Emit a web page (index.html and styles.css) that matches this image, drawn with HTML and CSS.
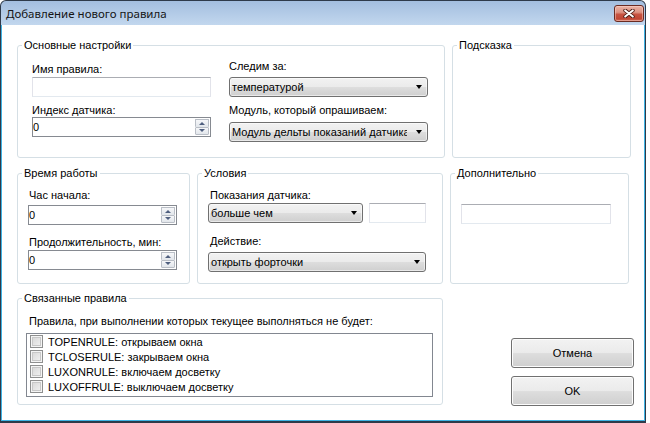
FILE: index.html
```html
<!DOCTYPE html>
<html lang="ru">
<head>
<meta charset="utf-8">
<title>Добавление нового правила</title>
<link rel="stylesheet" href="styles.css">
</head>
<body>
<div class="window">
  <div class="titlebar">
    <span class="title">Добавление нового правила</span>
    <button class="close" aria-label="Закрыть">
      <svg width="12" height="9" viewBox="0 0 12 9">
        <path d="M2.2 1.4 L9.8 7.6 M9.8 1.4 L2.2 7.6" stroke="#4a1a12" stroke-width="3.8" stroke-linecap="round"/>
        <path d="M2.2 1.4 L9.8 7.6 M9.8 1.4 L2.2 7.6" stroke="#ffffff" stroke-width="2" stroke-linecap="round"/>
      </svg>
    </button>
  </div>
  <div class="client">
    <div class="row row1">
      <section class="group g-main">
        <div class="gtitle">Основные настройки</div>
        <div class="cols">
          <div class="col c1">
            <div class="lbl m1-l1">Имя правила:</div>
            <div class="tb m1-tb"></div>
            <div class="lbl m1-l2">Индекс датчика:</div>
            <div class="num w-179"><span class="val">0</span><span class="spin"><span class="up"></span><span class="down"></span></span></div>
          </div>
          <div class="col c2">
            <div class="lbl m2-l1">Следим за:</div>
            <div class="combo w-199 m2-c1"><span class="ctext">температурой</span><span class="arrow"></span></div>
            <div class="lbl m2-l2">Модуль, который опрашиваем:</div>
            <div class="combo w-199 m2-c2"><span class="ctext clip">Модуль дельты показаний датчика</span><span class="arrow"></span></div>
          </div>
        </div>
      </section>
      <section class="group g-hint">
        <div class="gtitle">Подсказка</div>
      </section>
    </div>

    <div class="row row2">
      <section class="group g-time">
        <div class="gtitle">Время работы</div>
        <div class="inner">
          <div class="lbl t-l1">Час начала:</div>
          <div class="num w-149 t-n1"><span class="val">0</span><span class="spin"><span class="up"></span><span class="down"></span></span></div>
          <div class="lbl t-l2">Продолжительность, мин:</div>
          <div class="num w-149 t-n2"><span class="val">0</span><span class="spin"><span class="up"></span><span class="down"></span></span></div>
        </div>
      </section>
      <section class="group g-cond">
        <div class="gtitle">Условия</div>
        <div class="inner">
          <div class="lbl c-l1">Показания датчика:</div>
          <div class="pair">
            <div class="combo w-155"><span class="ctext">больше чем</span><span class="arrow"></span></div>
            <div class="tb w-57"></div>
          </div>
          <div class="lbl c-l2">Действие:</div>
          <div class="combo w-218 c-c2"><span class="ctext">открыть форточки</span><span class="arrow"></span></div>
        </div>
      </section>
      <section class="group g-extra">
        <div class="gtitle">Дополнительно</div>
        <div class="inner">
          <div class="tb w-150 x-tb"></div>
        </div>
      </section>
    </div>

    <div class="row row3">
      <section class="group g-linked">
        <div class="gtitle">Связанные правила</div>
        <div class="inner">
          <div class="lbl r-l1">Правила, при выполнении которых текущее выполняться не будет:</div>
          <div class="checklist">
            <div class="item"><span class="cb"></span><span>TOPENRULE: открываем окна</span></div>
            <div class="item"><span class="cb"></span><span>TCLOSERULE: закрываем окна</span></div>
            <div class="item"><span class="cb"></span><span>LUXONRULE: включаем досветку</span></div>
            <div class="item"><span class="cb"></span><span>LUXOFFRULE: выключаем досветку</span></div>
          </div>
        </div>
      </section>
      <div class="buttons">
        <button class="btn">Отмена</button>
        <button class="btn">OK</button>
      </div>
    </div>
  </div>
</div>
</body>
</html>
```
FILE: styles.css
```css
* { box-sizing: border-box; }
html, body { margin: 0; padding: 0; background: #fff; }
body {
  width: 650px; height: 423px; overflow: hidden;
  font-family: "Liberation Sans", Arial, sans-serif;
  font-size: 11px; color: #000;
}

.window {
  width: 646px; height: 423px;
  border: 1px solid #2e3a4a; border-bottom-width: 2px;
  border-radius: 6px 6px 0 0;
  background: linear-gradient(#a3bedf, #c2d7ee 24px, #c2d7ee);
  display: flex; flex-direction: column;
}

.titlebar {
  height: 24px; flex: none;
  display: flex; align-items: flex-start; justify-content: space-between;
}
.title {
  font-family: "Noto Sans", "Open Sans", sans-serif;
  font-size: 11.5px; line-height: 16px;
  margin: 5px 0 0 5px; color: #151515;
}
.close {
  width: 30px; height: 17px; margin: 4px 1px 0 0; padding: 0;
  border: 1px solid #6a2b22; border-radius: 3px;
  background: linear-gradient(#ebb3a5 0%, #dc9282 42%, #c75341 56%, #c04735 85%, #d3705c 100%);
  box-shadow: inset 0 0 0 1px rgba(255, 220, 210, 0.45);
  display: flex; align-items: center; justify-content: center;
}
.close svg { display: block; }

.client {
  flex: 1; background: #fff;
  border: 1px solid #3eb3e4; border-top: 0;
  padding: 20px 0 0 15px;
}

.row { display: flex; align-items: flex-start; }
.row1 { gap: 7px; }
.row2 { gap: 7px; margin-top: 15px; }
.row3 { margin-top: 14px; }

.group { border: 1px solid #d5dfe5; border-radius: 3px; }
.gtitle {
  margin: -7px 0 0 4px; padding: 0 2px;
  height: 13px; line-height: 13px;
  background: #fff; width: fit-content;
}
.g-main { width: 428px; height: 113px; }
.g-hint { width: 179px; height: 113px; }
.g-time { width: 173px; height: 111px; }
.g-cond { width: 246px; height: 111px; }
.g-extra { width: 179px; height: 111px; }
.g-linked { width: 426px; height: 107px; }

.lbl { height: 13px; line-height: 13px; white-space: nowrap; }

/* text box */
.tb {
  height: 20px;
  border: 1px solid #e2e3ea; border-top-color: #abadb3; border-bottom-color: #e3e9ef;
  background: #fff;
}

/* numeric up-down */
.num {
  height: 20px; display: flex;
  border: 1px solid #868a91; background: #fff;
}
.num .val { flex: 1; line-height: 18px; padding-left: 0; }
.spin { width: 15px; display: flex; flex-direction: column; padding: 1px 1px 1px 0; }
.spin span {
  flex: 1; position: relative;
  border: 1px solid #b9bec6; border-radius: 1px;
  background: linear-gradient(#f6f7f9, #e2e6eb);
}
.spin .up { border-bottom-width: 0; }
.spin span::after {
  content: ""; position: absolute; left: 50%; top: 50%;
  margin: -2px 0 0 -3px;
  border-left: 3px solid transparent; border-right: 3px solid transparent;
}
.spin .up::after { border-bottom: 3px solid #4f5f7f; margin-top: -1.5px; }
.spin .down::after { border-top: 3px solid #4f5f7f; margin-top: -1.5px; }

/* combo box */
.combo {
  height: 20px; display: flex; align-items: center;
  border: 1px solid #707070; border-radius: 3px;
  background: linear-gradient(#f2f2f2 0%, #ebebeb 48%, #dddddd 52%, #cfcfcf 100%);
  box-shadow: inset 0 0 0 1px rgba(255,255,255,0.55);
}
.ctext {
  flex: 1; overflow: hidden; white-space: nowrap;
  padding-left: 2px; margin-right: 6px; line-height: 18px;
}
.ctext.clip { margin-right: 9px; }
.arrow {
  width: 11px; height: 100%; flex: none;
  display: flex; align-items: center; justify-content: flex-start;
}
.arrow::after {
  content: ""; border-left: 3.5px solid transparent; border-right: 3.5px solid transparent;
  border-top: 4px solid #000;
}

.w-57 { width: 57px; }
.w-149 { width: 149px; }
.w-150 { width: 150px; }
.w-155 { width: 155px; }
.w-179 { width: 179px; }
.w-199 { width: 199px; }
.w-218 { width: 218px; }

/* main settings */
.cols { display: flex; padding-left: 14px; }
.c1 { width: 179px; }
.c2 { width: 199px; margin-left: 18px; }
.m1-l1 { margin-top: 11px; }
.m1-tb { margin-top: 1px; }
.m1-l2 { margin-top: 7px; }
.m2-l1 { margin-top: 8px; }
.m2-c1 { margin-top: 4px; }
.m2-l2 { margin-top: 7px; }
.m2-c2 { margin-top: 5px; }

/* row 2 */
.inner { padding-left: 10px; }
.t-l1 { margin: 9px 0 0 1px; }
.t-n1 { margin-top: 3px; }
.t-l2 { margin: 11px 0 0 1px; }
.t-n2 { margin-top: 1px; }

.c-l1 { margin: 9px 0 0 2px; }
.pair { display: flex; gap: 6px; margin-top: 1px; }
.c-l2 { margin: 12px 0 0 2px; }
.c-c2 { margin-top: 4px; }

.x-tb { margin-top: 24px; }

/* row 3 */
.g-linked .inner { padding-left: 8px; }
.r-l1 { margin: 10px 0 0 3px; }
.checklist {
  width: 407px; height: 64px; margin-top: 5px;
  border: 1px solid #828790; background: #fff;
}
.item { height: 15px; display: flex; align-items: center; padding-left: 3px; white-space: nowrap; }
.cb {
  width: 13px; height: 13px; flex: none; margin-right: 5px;
  border: 1px solid #8e8f8f;
  background: linear-gradient(135deg, #d4d4d4, #f4f4f4);
  box-shadow: inset 0 0 0 1px #f4f4f4, inset 0 0 0 2px #c8c8c8;
}

.buttons { display: flex; flex-direction: column; gap: 8px; margin: 40px 0 0 68px; }
.btn {
  width: 123px; height: 30px; padding: 0;
  font-family: "Liberation Sans", Arial, sans-serif; font-size: 11px; color: #000;
  border: 1px solid #707070; border-radius: 3px;
  background: linear-gradient(#f2f2f2 0%, #ebebeb 48%, #dddddd 52%, #cfcfcf 100%);
  box-shadow: inset 0 0 0 1px #fcfcfc;
}
```
